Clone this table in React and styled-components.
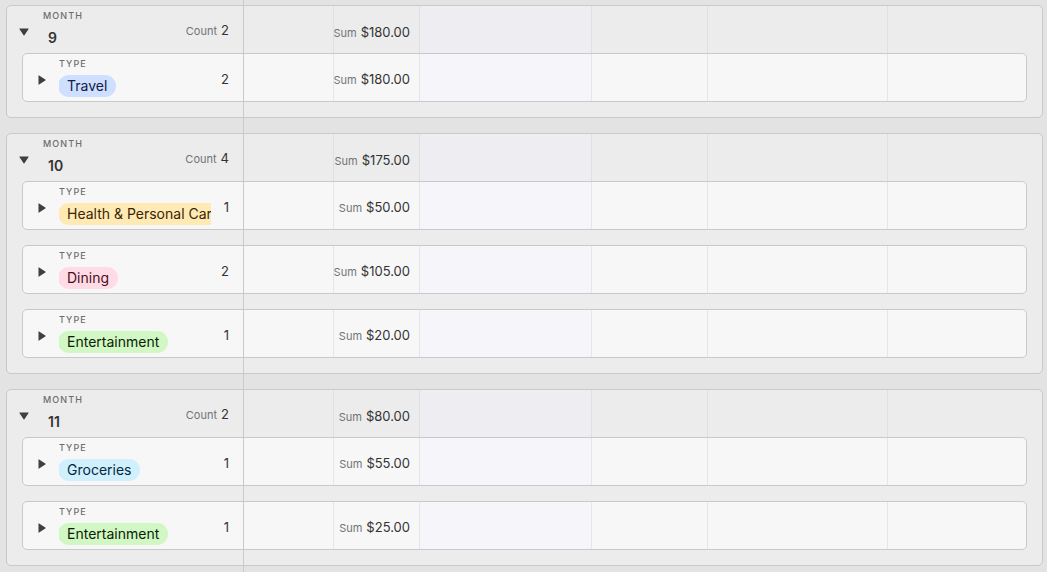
import React from 'react'
import styled, { createGlobalStyle } from 'styled-components'

const GlobalStyle = createGlobalStyle`
  html, body { margin: 0; padding: 0; overflow: hidden; }
  body { font-family: Inter, "Noto Sans", sans-serif; color: #333; }
  * { box-sizing: border-box; }
`

// pill colours: background / text
const tones = {
  blue: ['#cfdfff', '#102046'],
  yellow: ['#ffeab6', '#3b2501'],
  red: ['#ffdce5', '#4c0c1c'],
  green: ['#d1f7c4', '#0b1d05'],
  cyan: ['#d0f0fd', '#04283f'],
}

const groups = [
  { month: '9', count: 2, sum: '$180.00', rows: [
    { type: 'Travel', tone: 'blue', count: 2, sum: '$180.00' },
  ]},
  { month: '10', count: 4, sum: '$175.00', rows: [
    { type: 'Health & Personal Care', tone: 'yellow', count: 1, sum: '$50.00' },
    { type: 'Dining', tone: 'red', count: 2, sum: '$105.00' },
    { type: 'Entertainment', tone: 'green', count: 1, sum: '$20.00' },
  ]},
  { month: '11', count: 2, sum: '$80.00', rows: [
    { type: 'Groceries', tone: 'cyan', count: 1, sum: '$55.00' },
    { type: 'Entertainment', tone: 'green', count: 1, sum: '$25.00' },
  ]},
]

function DownArrow() {
  return (
    <svg width="10" height="8" viewBox="0 0 10 8">
      <path d="M0.7 0.5 H9.3 Q9.9 0.5 9.6 1.1 L5.4 7.3 Q5 7.8 4.6 7.3 L0.4 1.1 Q0.1 0.5 0.7 0.5 Z" fill="#3f3f3f" />
    </svg>
  )
}

function RightArrow() {
  return (
    <svg width="8" height="10" viewBox="0 0 8 10">
      <path d="M0.5 0.7 V9.3 Q0.5 9.9 1.1 9.6 L7.3 5.4 Q7.8 5 7.3 4.6 L1.1 0.4 Q0.5 0.1 0.5 0.7 Z" fill="#3f3f3f" />
    </svg>
  )
}

function Cells({ sum, inRow }) {
  return (
    <>
      <Cell $inRow={inRow} />
      <Cell $inRow={inRow}>
        <SmallLabel>Sum</SmallLabel>
        <Value>{sum}</Value>
      </Cell>
      <Cell $inRow={inRow} $tint />
      <Cell $inRow={inRow} />
      <Cell $inRow={inRow} />
      <Cell $inRow={inRow} $last />
    </>
  )
}

function Group({ group }) {
  return (
    <GroupBox>
      <GroupHeader>
        <Lead $inset={12} $arrow={24}>
          <DownArrow />
          <Stack>
            <FieldLabel>Month</FieldLabel>
            <MonthValue>{group.month}</MonthValue>
          </Stack>
          <Count $lift={4}>
            <SmallLabel>Count</SmallLabel>
            <Value>{group.count}</Value>
          </Count>
        </Lead>
        <Cells sum={group.sum} />
      </GroupHeader>
      <RowList>
        {group.rows.map((r, i) => (
          <Row key={i}>
            <Lead $inset={15} $arrow={21}>
              <RightArrow />
              <Stack>
                <FieldLabel>Type</FieldLabel>
                <Pill $tone={r.tone}>{r.type}</Pill>
              </Stack>
              <Count $lift={1}>
                <Value>{r.count}</Value>
              </Count>
            </Lead>
            <Cells sum={r.sum} inRow />
          </Row>
        ))}
      </RowList>
    </GroupBox>
  )
}

export default function App() {
  return (
    <>
      <GlobalStyle />
      <Page>
        {groups.map((g) => <Group key={g.month} group={g} />)}
      </Page>
    </>
  )
}

const Page = styled.div`
  min-height: 100vh;
  padding: 5px 4px 0 6px;
  display: flex;
  flex-direction: column;
  gap: 15px;
  background:
    linear-gradient(90deg, transparent 243px, #cbcbcb 243px, #cbcbcb 244px, transparent 244px),
    #e3e3e3;
`

const GroupBox = styled.div`
  border: 1px solid #c9c9c9;
  border-radius: 5px;
  background: #ececec;
  overflow: hidden;
`

const GroupHeader = styled.div`
  display: grid;
  grid-template-columns: 237px 90px 86px 172px 116px 180px 1fr;
  height: 47px;
`

const RowList = styled.div`
  display: flex;
  flex-direction: column;
  gap: 15px;
  padding: 0 15px 15px;
  background: linear-gradient(90deg, transparent 236px, #cbcbcb 236px, #cbcbcb 237px, transparent 237px);
`

const Row = styled.div`
  display: grid;
  grid-template-columns: 221px 90px 86px 172px 116px 180px 1fr;
  height: 49px;
  border: 1px solid #c9c9c9;
  border-radius: 5px;
  background: #f7f7f7;
  overflow: hidden;
`

const Lead = styled.div`
  display: grid;
  grid-template-columns: ${(p) => p.$arrow}px 1fr auto;
  align-items: center;
  padding: 4px 14px 0 ${(p) => p.$inset}px;
  border-right: 1px solid #c9c9c9;
  min-width: 0;

  & > svg { display: block; }
`

const Stack = styled.div`
  align-self: start;
  min-width: 0;
  overflow: hidden;
  display: flex;
  flex-direction: column;
  align-items: flex-start;
  max-width: 152px;
`

const FieldLabel = styled.div`
  font-size: 9px;
  line-height: 12px;
  font-weight: 500;
  letter-spacing: 1.1px;
  text-transform: uppercase;
  color: #6c6c6c;
`

const MonthValue = styled.div`
  margin: 6px 0 0 5px;
  font-size: 14px;
  line-height: 20px;
  font-weight: 600;
  color: #333;
`

const Pill = styled.div`
  margin: 5px 0 0 -1px;
  height: 22px;
  padding: 0 9px;
  border-radius: 11px;
  white-space: nowrap;
  font-size: 14px;
  line-height: 22px;
  background: ${(p) => tones[p.$tone][0]};
  color: ${(p) => tones[p.$tone][1]};
`

const Count = styled.div`
  display: flex;
  align-items: baseline;
  gap: 4px;
  padding-left: 8px;
  margin-bottom: ${(p) => p.$lift}px;
`

const SmallLabel = styled.span`
  font-size: 11px;
  color: #737373;
`

const Value = styled.span`
  font-size: 13px;
  color: #333;
  white-space: nowrap;
`

const Cell = styled.div`
  display: flex;
  align-items: baseline;
  justify-content: flex-end;
  gap: 4px;
  padding: 0 9px 0 0;
  padding-top: ${(p) => (p.$inRow ? '17px' : '18px')};
  overflow: hidden;
  white-space: nowrap;
  border-right: ${(p) => (p.$last ? 'none' : `1px solid ${p.$inRow ? '#e6e6e6' : '#e0e0e0'}`)};
  background: ${(p) => (p.$tint ? (p.$inRow ? '#f6f5f9' : '#eeedf2') : 'transparent')};
`
